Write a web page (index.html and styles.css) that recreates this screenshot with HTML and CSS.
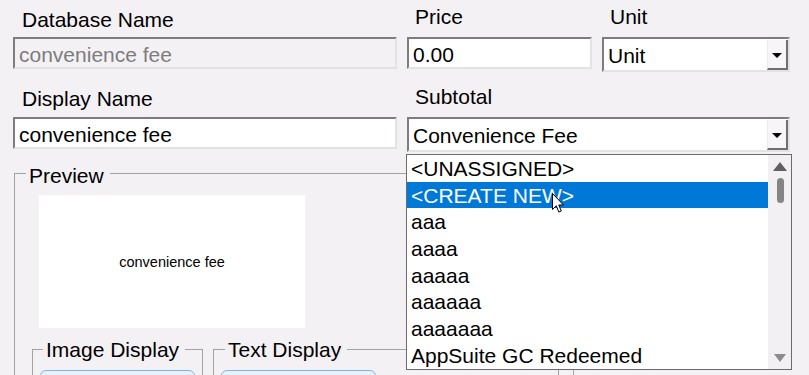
FILE: index.html
```html
<!DOCTYPE html>
<html lang="en">
<head>
    <meta charset="UTF-8">
    <meta name="viewport" content="width=device-width, initial-scale=1.0">
    <title>Edit Item</title>
    <link rel="stylesheet" href="styles.css">
</head>
<body>
<div class="window">
<div class="form">
    <label class="label label-left">Database Name</label>
    <label class="label">Price</label>
    <label class="label">Unit</label>

    <div class="input disabled">convenience fee</div>
    <div class="input">0.00</div>
    <div class="select">
        <span class="select-text">Unit</span>
        <span class="select-btn"><span class="arrow"></span></span>
    </div>

    <label class="label label-left label-gap">Display Name</label>
    <label class="label label-gap span-2">Subtotal</label>

    <div class="input">convenience fee</div>
    <div class="select span-2 has-list">
        <span class="select-text">Convenience Fee</span>
        <span class="select-btn"><span class="arrow"></span></span>

        <div class="droplist">
            <ul class="items">
                <li>&lt;UNASSIGNED&gt;</li>
                <li class="selected">&lt;CREATE NEW&gt;</li>
                <li>aaa</li>
                <li>aaaa</li>
                <li>aaaaa</li>
                <li>aaaaaa</li>
                <li>aaaaaaa</li>
                <li>AppSuite GC Redeemed</li>
            </ul>
            <div class="scrollbar">
                <svg class="sb-up" width="14" height="9" viewBox="0 0 14 9"><path d="M7 0 L14 9 L0 9 Z" fill="#606060"/></svg>
                <div class="sb-thumb"></div>
                <svg class="sb-down" width="12" height="8" viewBox="0 0 12 8"><path d="M0 0 L12 0 L6 8 Z" fill="#8c8c8c"/></svg>
            </div>
            <svg class="cursor" width="13" height="21" viewBox="0 0 13 21">
                <path d="M0.5 0.5 L0.5 16.5 L4.3 12.8 L6.8 19 L9.3 18 L6.8 12 L11.5 12 Z" fill="#fff" stroke="#000" stroke-width="1"/>
            </svg>
        </div>
    </div>
</div>

<fieldset class="group preview-group">
    <legend>Preview</legend>
    <div class="preview-box">convenience fee</div>
    <div class="sub-groups">
        <fieldset class="group sub image-group">
            <legend>Image Display</legend>
            <button class="btn" type="button"></button>
        </fieldset>
        <fieldset class="group sub text-group">
            <legend>Text Display</legend>
            <button class="btn" type="button"></button>
        </fieldset>
    </div>
</fieldset>
</div>
</body>
</html>
```

FILE: styles.css
```css
body {
    margin: 0;
    background-color: #f4f1f5;
    font-family: "Liberation Sans", Arial, sans-serif;
    font-size: 21px;
    color: #000;
}
.window {
    width: 809px;
    height: 375px;
    overflow: hidden;
}
.form {
    display: grid;
    grid-template-columns: 384px 185px 188px;
    column-gap: 10px;
    padding-left: 13px;
}
.span-2 {
    grid-column: span 2;
}
.label {
    display: block;
    height: 37px;
    box-sizing: border-box;
    padding: 5px 0 0 8px;
    line-height: 24px;
}
.label-left {
    padding-top: 8px;
    padding-left: 9px;
}
.label-gap {
    height: 45px;
    padding-top: 13px;
}
.label-gap.label-left {
    padding-top: 15px;
}
.input {
    height: 32px;
    box-sizing: border-box;
    padding: 3px 4px 0;
    line-height: 26px;
    background: #fff;
    border: 2px solid #e3e3e3;
    border-top-color: #7d7d7d;
    border-left-color: #7d7d7d;
    white-space: nowrap;
}
.input.disabled {
    background: #f4f1f5;
    color: #7d7d7d;
}
.select {
    position: relative;
    display: flex;
    height: 35px;
    box-sizing: border-box;
    background: #fff;
    border: 2px solid #e3e3e3;
    border-top-color: #7d7d7d;
    border-left-color: #7d7d7d;
}
.select-text {
    flex: 1;
    padding: 5px 0 0 4px;
    line-height: 24px;
}
.select-btn {
    width: 21px;
    display: flex;
    align-items: center;
    justify-content: center;
    background: #f7f5f7;
    border-left: 1px solid #ececec;
    border-right: 2px solid #707070;
    border-bottom: 2px solid #707070;
    box-sizing: border-box;
    margin-top: 1px;
}
.arrow {
    width: 0;
    height: 0;
    border-left: 5px solid transparent;
    border-right: 5px solid transparent;
    border-top: 5px solid #000;
    margin-top: 2px;
}
.droplist {
    position: absolute;
    left: -3px;
    top: 35px;
    width: 386px;
    height: 216px;
    box-sizing: border-box;
    display: flex;
    background: #fff;
    border: 1px solid #6b6b6b;
    z-index: 5;
}
.items {
    flex: 1;
    list-style: none;
    margin: 0;
    padding: 0;
}
.items li {
    height: 26.7px;
    line-height: 27px;
    padding-left: 4px;
    white-space: nowrap;
}
.items li.selected {
    background: #0078d7;
    color: #fff;
}
.scrollbar {
    width: 23px;
    background: #f3f0f3;
    display: flex;
    flex-direction: column;
    align-items: center;
}
.sb-up {
    margin-top: 7px;
    margin-left: 1px;
}
.sb-thumb {
    width: 7px;
    height: 25px;
    margin-top: 7px;
    margin-left: 2px;
    border-radius: 4px;
    background: #858585;
}
.sb-down {
    margin-top: auto;
    margin-bottom: 7px;
    margin-left: 1px;
}
.cursor {
    position: absolute;
    left: 145px;
    top: 38px;
}
.group {
    margin: 0;
    padding: 0;
    border: 1px solid #a3a3a3;
    box-sizing: border-box;
}
.group legend {
    margin-left: 11px;
    padding: 6px 6px 0 3px;
    line-height: 24px;
}
.preview-group {
    margin: 6px 0 0 14px;
    width: 560px;
    height: 260px;
}
.preview-box {
    width: 266px;
    height: 133px;
    margin: 7px 0 0 24px;
    background: #fff;
    display: flex;
    align-items: center;
    justify-content: center;
    font-size: 14.5px;
}
.sub-groups {
    display: flex;
    gap: 10px;
    margin: 8px 0 0 17px;
}
.group.sub legend {
    padding-top: 2px;
}
.image-group {
    width: 171px;
    height: 80px;
}
.image-group legend {
    margin-left: 10px;
}
.text-group {
    width: 346px;
    height: 80px;
}
.btn {
    display: block;
    width: 155px;
    height: 30px;
    margin: 8px 0 0 7px;
    border: 1px solid #7eb4ea;
    border-radius: 6px;
    background: #e5f1fb;
}
```
